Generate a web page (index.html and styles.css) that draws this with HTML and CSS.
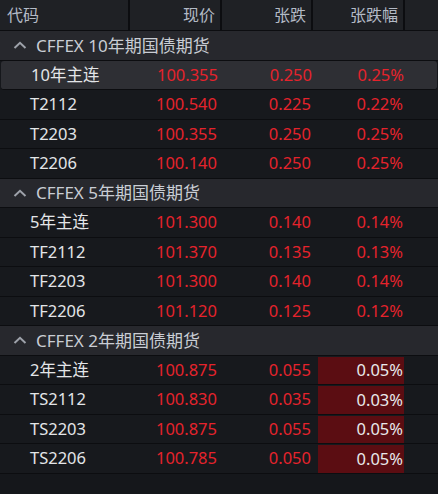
FILE: index.html
```html
<!DOCTYPE html>
<html lang="zh">
<head>
<meta charset="utf-8">
<link rel="stylesheet" href="styles.css">
</head>
<body>
<div class="board">
  <div class="head">
    <div class="hc name">代码</div>
    <div class="hc num">现价</div>
    <div class="hc num">张跌</div>
    <div class="hc num">张跌幅</div>
    <div class="hc"></div>
  </div>

  <div class="group"><svg class="chev" width="14" height="8" viewBox="0 0 14 8"><polyline points="1.5,7 7,1.8 12.5,7" fill="none" stroke="#9ea2aa" stroke-width="2"/></svg><span>CFFEX 10年期国债期货</span></div>
  <div class="row sel"><div class="c name">10年主连</div><div class="c price">100.355</div><div class="c chg">0.250</div><div class="c pct"><span class="pv">0.25%</span></div></div>
  <div class="row"><div class="c name">T2112</div><div class="c price">100.540</div><div class="c chg">0.225</div><div class="c pct"><span class="pv">0.22%</span></div></div>
  <div class="row"><div class="c name">T2203</div><div class="c price">100.355</div><div class="c chg">0.250</div><div class="c pct"><span class="pv">0.25%</span></div></div>
  <div class="row"><div class="c name">T2206</div><div class="c price">100.140</div><div class="c chg">0.250</div><div class="c pct"><span class="pv">0.25%</span></div></div>

  <div class="group"><svg class="chev" width="14" height="8" viewBox="0 0 14 8"><polyline points="1.5,7 7,1.8 12.5,7" fill="none" stroke="#9ea2aa" stroke-width="2"/></svg><span>CFFEX 5年期国债期货</span></div>
  <div class="row"><div class="c name">5年主连</div><div class="c price">101.300</div><div class="c chg">0.140</div><div class="c pct"><span class="pv">0.14%</span></div></div>
  <div class="row"><div class="c name">TF2112</div><div class="c price">101.370</div><div class="c chg">0.135</div><div class="c pct"><span class="pv">0.13%</span></div></div>
  <div class="row"><div class="c name">TF2203</div><div class="c price">101.300</div><div class="c chg">0.140</div><div class="c pct"><span class="pv">0.14%</span></div></div>
  <div class="row"><div class="c name">TF2206</div><div class="c price">101.120</div><div class="c chg">0.125</div><div class="c pct"><span class="pv">0.12%</span></div></div>

  <div class="group"><svg class="chev" width="14" height="8" viewBox="0 0 14 8"><polyline points="1.5,7 7,1.8 12.5,7" fill="none" stroke="#9ea2aa" stroke-width="2"/></svg><span>CFFEX 2年期国债期货</span></div>
  <div class="row"><div class="c name">2年主连</div><div class="c price">100.875</div><div class="c chg">0.055</div><div class="c pct hot"><span class="pv">0.05%</span></div></div>
  <div class="row"><div class="c name">TS2112</div><div class="c price">100.830</div><div class="c chg">0.035</div><div class="c pct hot"><span class="pv">0.03%</span></div></div>
  <div class="row"><div class="c name">TS2203</div><div class="c price">100.875</div><div class="c chg">0.055</div><div class="c pct hot"><span class="pv">0.05%</span></div></div>
  <div class="row"><div class="c name">TS2206</div><div class="c price">100.785</div><div class="c chg">0.050</div><div class="c pct hot"><span class="pv">0.05%</span></div></div>
</div>
</body>
</html>
```

FILE: styles.css
```css
html, body {
  margin: 0;
  padding: 0;
  background: #15171b;
}
body {
  width: 438px;
  height: 494px;
  overflow: hidden;
  font-family: "Noto Sans", "Noto Sans CJK SC", sans-serif;
  font-size: 16.5px;
}
.board {
  display: flex;
  flex-direction: column;
}
.head {
  display: grid;
  grid-template-columns: 130px 92px 91px 92px 33px;
  height: 31px;
  background: #0c0d10;
  box-sizing: border-box;
  border-bottom: 1px solid #0c0d10;
  font-size: 16px;
}
.hc {
  background: #1f2125;
  color: #b3bac5;
  display: flex;
  align-items: center;
  line-height: 1;
  border-right: 2px solid #0c0d10;
}
.hc:last-child { border-right: none; }
.hc.name { padding-left: 7px; }
.hc.num { justify-content: flex-end; padding-right: 5px; }

.group {
  height: 29.5px;
  box-sizing: border-box;
  background: #27282d;
  border-bottom: 1px solid #0c0d10;
  display: flex;
  align-items: center;
  color: #c9cdd4;
  line-height: 1;
  font-size: 17px;
}
.chev { margin-left: 13px; margin-right: 9px; }

.row {
  height: 29.5px;
  box-sizing: border-box;
  display: grid;
  grid-template-columns: 130px 92px 91px 92px 33px;
  border-bottom: 1px solid #0c0d10;
  background: #17191d;
  line-height: 1;
}
.row.sel {
  background: #2e2f34;
  border-radius: 3px;
  margin: 0 1px;
}
.c {
  display: flex;
  align-items: center;
}
.c.name { padding-left: 30px; color: #e3e5e8; }
.c.price { justify-content: flex-end; padding-right: 5px; color: #e5232c; }
.c.chg { justify-content: flex-end; padding-right: 2px; color: #e5232c; }
.c.pct { justify-content: flex-end; padding-right: 2px; color: #e5232c; }
.c.pct.hot {
  padding: 1px 1px 0 5px;
  align-items: stretch;
}
.c.pct.hot .pv {
  flex: 1;
  background: #5b0d12;
  color: #e8e8ea;
  display: flex;
  align-items: center;
  justify-content: flex-end;
  padding-right: 1px;
}
```
